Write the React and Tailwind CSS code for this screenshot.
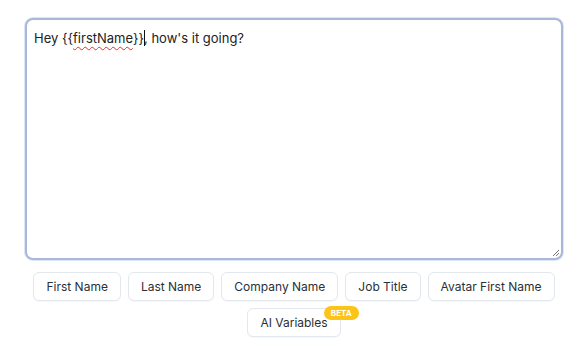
const variables = ['First Name', 'Last Name', 'Company Name', 'Job Title', 'Avatar First Name'];

function VarButton({ label, beta }) {
  return (
    <button
      type="button"
      className="relative h-[29px] px-[12px] rounded-md border border-[#e3e7ee] bg-white text-[12px] text-[#2b2f38] shadow-[0_1px_1px_rgba(0,0,0,0.03)]"
    >
      {label}
      {beta && (
        <span className="absolute -top-[3px] -right-[19px] rounded-full bg-[#fcc419] px-[7px] py-[2px] text-[8px] font-bold leading-[10px] text-white">
          BETA
        </span>
      )}
    </button>
  );
}

export default function App() {
  return (
    <div className="w-[588px] h-[352px] bg-white px-[25px] pt-[18px]" style={{ fontFamily: 'Inter, "Noto Sans", sans-serif' }}>
      <div className="relative h-[242px] rounded-lg border-2 border-[#a9b8d8] ring-1 ring-[#dfe6f3] bg-white px-[7px] pt-[9px] text-[13px] text-[#222]">
        <p>
          Hey {'{{'}
          <span className="underline decoration-wavy decoration-[#e03131] decoration-1 underline-offset-[3px]">firstName</span>
          {'}}'}
          <span className="inline-block w-px h-[16px] bg-[#111] align-[-3px]" />
          <span className="-ml-[1px]">,</span> how's it going?
        </p>
        <svg className="absolute right-[1px] bottom-[1px]" width="9" height="9" viewBox="0 0 9 9">
          <path d="M8 2 L2 8 M8 5 L5 8" stroke="#777" strokeWidth="1" />
        </svg>
      </div>
      <div className="mt-[12px] flex flex-wrap justify-center gap-x-[7px] gap-y-[7px]">
        {variables.map((v) => (
          <VarButton key={v} label={v} />
        ))}
        <VarButton label="AI Variables" beta />
      </div>
    </div>
  );
}
